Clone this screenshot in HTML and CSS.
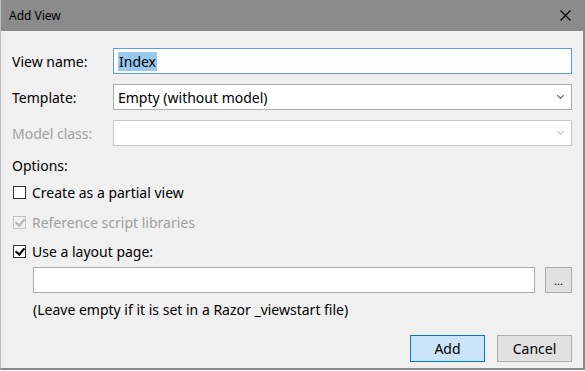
FILE: index.html
```html
<!DOCTYPE html>
<html lang="en">
<head>
    <meta charset="UTF-8">
    <title>Add View</title>
    <link rel="stylesheet" href="styles.css">
</head>
<body>
    <div class="window">
        <div class="titlebar">
            <span class="title">Add View</span>
            <svg class="close" width="11" height="11" viewBox="0 0 11 11">
                <path d="M0.5 0.5 L10.5 10.5 M10.5 0.5 L0.5 10.5" stroke="#000" stroke-width="1.2"/>
            </svg>
        </div>
        <div class="content">
            <div class="form-row">
                <label>View name:</label>
                <div class="field focused"><span class="selected">Index</span></div>
            </div>
            <div class="form-row">
                <label>Template:</label>
                <div class="field select">Empty (without model)<span class="chevron"></span></div>
            </div>
            <div class="form-row disabled">
                <label>Model class:</label>
                <div class="field select"><span class="chevron"></span></div>
            </div>
            <div class="options">Options:</div>
            <div class="check-row first">
                <span class="box"></span>
                <span>Create as a partial view</span>
            </div>
            <div class="check-row disabled">
                <span class="box checked"></span>
                <span>Reference script libraries</span>
            </div>
            <div class="check-row last">
                <span class="box checked"></span>
                <span>Use a layout page:</span>
            </div>
            <div class="layout-row">
                <div class="field"></div>
                <button class="browse">...</button>
            </div>
            <div class="hint">(Leave empty if it is set in a Razor _viewstart file)</div>
            <div class="actions">
                <button class="primary">Add</button>
                <button>Cancel</button>
            </div>
        </div>
    </div>
</body>
</html>
```

FILE: styles.css
```css
body {
    margin: 0;
    font-family: "Noto Sans", "Open Sans", sans-serif;
    font-size: 14px;
    color: #000;
}
.window {
    width: 585px;
    height: 370px;
    box-sizing: border-box;
    background: #f0f0f0;
    border-right: 2px solid #8a8a8a;
    border-bottom: 2px solid #8a8a8a;
    border-left: 1px solid #bdbdbd;
}
.titlebar {
    height: 31px;
    background: #8b8b8b;
    display: flex;
    align-items: center;
    justify-content: space-between;
    padding: 0 10px 0 8px;
}
.title {
    font-size: 12px;
}
.close {
    margin-right: 2px;
}
.content {
    padding: 17px 11px 0 11px;
}
.form-row {
    display: flex;
    align-items: center;
    margin-bottom: 10px;
}
.form-row label {
    width: 101px;
}
.field {
    flex: 1;
    height: 26px;
    box-sizing: border-box;
    background: #fff;
    border: 1px solid #adadad;
    display: flex;
    align-items: center;
    padding: 0 4px;
    position: relative;
}
.field.focused {
    border-color: #5a9ee6;
}
.selected {
    background: #99c9ef;
    padding: 0 1px;
    line-height: 19px;
}
.chevron {
    position: absolute;
    right: 8px;
    top: 8px;
    width: 4px;
    height: 4px;
    border-right: 1px solid #555;
    border-bottom: 1px solid #555;
    transform: rotate(45deg);
}
.disabled {
    color: #a0a0a0;
}
.disabled .field {
    border-color: #c8c8c8;
}
.disabled .chevron {
    border-color: #bbb;
}
.options {
    margin-top: 1px;
    height: 20px;
    line-height: 20px;
}
.check-row {
    display: flex;
    align-items: center;
    height: 20px;
    margin-top: 10px;
}
.check-row.first {
    margin-top: 6px;
}
.check-row.last {
    margin-top: 9px;
}
.box {
    width: 13px;
    height: 13px;
    box-sizing: border-box;
    border: 1px solid #333;
    background: #fff;
    margin: 0 6px 0 1px;
    position: relative;
}
.box.checked::after {
    content: "";
    position: absolute;
    left: 3px;
    top: 0px;
    width: 4px;
    height: 7px;
    border-right: 2px solid #000;
    border-bottom: 2px solid #000;
    transform: rotate(40deg);
}
.disabled .box {
    border-color: #c4c4c4;
    background: #f0f0f0;
}
.disabled .box.checked::after {
    border-color: #b4b4b4;
}
.layout-row {
    display: flex;
    align-items: center;
    margin: 6px 0 0 21px;
}
.browse {
    width: 27px;
    height: 26px;
    margin-left: 10px;
    font-size: 11px;
}
button {
    font-family: inherit;
    font-size: 14px;
    background: #e1e1e1;
    border: 1px solid #adadad;
    padding: 0;
    box-sizing: border-box;
}
.hint {
    margin: 7px 0 0 21px;
    height: 20px;
    line-height: 20px;
}
.actions {
    display: flex;
    justify-content: flex-end;
    gap: 12px;
    margin-top: 15px;
}
.actions button {
    width: 75px;
    height: 27px;
}
.actions .primary {
    background: #cce4f7;
    border-color: #0078d7;
}
```
